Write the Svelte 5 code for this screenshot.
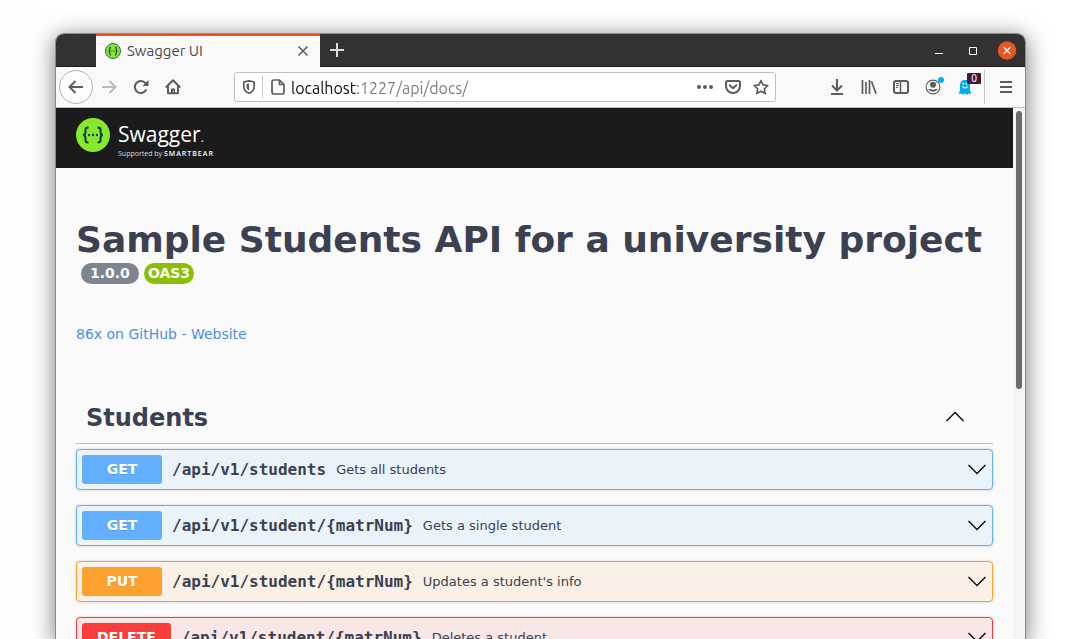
<script>
  let url = $state('localhost:1227/api/docs/');
  let open = $state(true);

  const operations = [
    { method: 'GET', path: '/api/v1/students', summary: 'Gets all students' },
    { method: 'GET', path: '/api/v1/student/{matrNum}', summary: 'Gets a single student' },
    { method: 'PUT', path: '/api/v1/student/{matrNum}', summary: "Updates a student's info" },
    { method: 'DELETE', path: '/api/v1/student/{matrNum}', summary: 'Deletes a student' }
  ];
</script>

<div class="desktop">
  <div class="window">
    <header class="titlebar">
      <div class="tab">
        <svg class="favicon" width="16" height="16" viewBox="0 0 16 16" fill="none">
          <circle cx="8" cy="8" r="7.5" fill="#85ea2d" stroke="#2c6a50" />
          <path d="M6 4C4.4 4 5 5.6 4.8 6.9 4.7 7.6 4.3 8 3.5 8c.8 0 1.200.4 1.300 1.100C5 10.400 4.400 12 6 12M10 4c1.600 0 1 1.600 1.200 2.900.1.7.5 1.100 1.300 1.100-.8 0-1.200.4-1.300 1.100C11 10.400 11.600 12 10 12" stroke="#173647" stroke-width="1.100" />
          <path d="M5.500 8h5" stroke="#4a9a45" />
        </svg>
        <span class="tab-title">Swagger UI</span>
        <button class="icon tab-close" aria-label="Close tab">
          <svg width="16" height="16" viewBox="0 0 16 16" fill="none" stroke="#5c5c5c" stroke-width="1.500"><path d="M3.500 3.500l9 9M12.500 3.500l-9 9" /></svg>
        </button>
      </div>
      <button class="icon new-tab" aria-label="New tab">
        <svg width="16" height="16" viewBox="0 0 16 16" fill="none" stroke="#dedede" stroke-width="2"><path d="M8 1v14M1 8h14" /></svg>
      </button>
      <div class="controls">
        <button class="icon" aria-label="Minimize">
          <svg width="20" height="20" viewBox="0 0 20 20" fill="none" stroke="#fff"><path d="M6 13.500h8" /></svg>
        </button>
        <button class="icon" aria-label="Maximize">
          <svg width="20" height="20" viewBox="0 0 20 20" fill="none" stroke="#fff"><path d="M6.500 7.500h7v7h-7z" /></svg>
        </button>
        <button class="icon" aria-label="Close window">
          <svg width="20" height="20" viewBox="0 0 20 20" fill="none"><circle cx="10" cy="10.500" r="9.300" fill="#e95420" /><path d="M6.500 7l7 7M13.500 7l-7 7" stroke="#fff" stroke-width="1.300" /></svg>
        </button>
      </div>
    </header>

    <nav class="toolbar">
      <button class="icon back" aria-label="Back">
        <svg width="16" height="16" viewBox="0 0 16 16"><path d="M15 8H1.500M7.500 2L1.500 8l6 6" /></svg>
      </button>
      <button class="icon tool faded" aria-label="Forward">
        <svg width="16" height="16" viewBox="0 0 16 16"><path d="M1 8h13.500M8.500 2l6 6-6 6" /></svg>
      </button>
      <button class="icon tool" aria-label="Reload">
        <svg width="16" height="16" viewBox="0 0 16 16"><path d="M13.300 10.500A6 6 0 1 1 12.500 4.200L14 6" /><path d="M15.500 1v6h-6z" fill="#5c5c5c" stroke="none" /></svg>
      </button>
      <button class="icon tool" aria-label="Home">
        <svg width="16" height="16" viewBox="0 0 16 16"><path d="M.8 8.500L8 1.300l7.200 7.200M3 7v7.200h10V7" stroke-linejoin="round" /><path d="M6 15V9.500h4V15z" fill="#5c5c5c" stroke="none" /><path d="M8 12h1v1H8z" fill="#f9f9fa" stroke="none" /></svg>
      </button>

      <div class="urlbar">
        <button class="icon shield" aria-label="Tracking protection">
          <svg width="14" height="16" viewBox="0 0 14 16"><path d="M7 1.800L12.200 3v4.500c0 3-2 5.500-5.200 6.700C3.800 13 1.800 10.500 1.800 7.500V3z" stroke-width="1.700" stroke-linejoin="round" /><path d="M7 4.500v7C5.200 10.500 4.500 9 4.500 7.500V5z" fill="#5c5c5c" stroke="none" /></svg>
        </button>
        <svg class="page-icon" width="14" height="16" viewBox="0 0 14 16"><path d="M3 1h5.500L13 5.500V13q0 2-2 2H3q-2 0-2-2V3q0-2 2-2zM8.500 1v4.500H13" stroke-width="1.700" stroke-linejoin="round" /></svg>
        <input type="text" aria-label="Address" bind:value={url} spellcheck="false" />
        <button class="icon action" aria-label="Page actions">
          <svg width="18" height="16" viewBox="0 0 18 16"><g fill="#5c5c5c" stroke="none"><circle cx="3" cy="8" r="2" /><circle cx="9" cy="8" r="2" /><circle cx="15" cy="8" r="2" /></g></svg>
        </button>
        <button class="icon action" aria-label="Save to Pocket">
          <svg width="16" height="16" viewBox="0 0 16 16"><path d="M2.500 2h11Q15 2 15 3.500V7A7 7 0 0 1 1 7V3.500Q1 2 2.500 2z" /><path d="M4.700 6.200L8 9.300l3.300-3.100" stroke-linecap="round" stroke-linejoin="round" /></svg>
        </button>
        <button class="icon action" aria-label="Bookmark">
          <svg width="16" height="16" viewBox="0 0 16 16"><path d="M8 1.500l2 4.400 4.800.6-3.500 3.300.9 4.800L8 12.200l-4.200 2.400.9-4.800L1.200 6.500 6 5.900z" stroke-width="1.700" stroke-linejoin="round" /></svg>
        </button>
      </div>

      <button class="icon tool" aria-label="Downloads">
        <svg width="16" height="16" viewBox="0 0 16 16"><path d="M8 0v11M3 6.500l5 5 5-5M2 15h12" /></svg>
      </button>
      <button class="icon tool" aria-label="Library">
        <svg width="16" height="16" viewBox="0 0 16 16"><path d="M1.500 1v14M5 3v12M8.500 1v14M10.500 2.300L15 14.700" stroke-width="1.700" /></svg>
      </button>
      <button class="icon tool" aria-label="Sidebars">
        <svg width="16" height="16" viewBox="0 0 16 16"><rect x="1" y="2" width="14" height="12" rx="2" /><path d="M7.500 2v12" stroke-width="1.500" /><path d="M3 4.500h3M3 6.500h3M3 8.500h2" stroke-width="1" /></svg>
      </button>
      <button class="icon tool" aria-label="Account">
        <svg width="16" height="16" viewBox="0 0 16 16"><circle cx="8" cy="8" r="6.900" stroke-width="1.100" /><circle cx="8" cy="5.800" r="3" fill="#5c5c5c" stroke="none" /><path d="M3.300 10h2.200Q8 11.300 10.500 10h2.200a5.300 5.300 0 0 1-9.400 0z" fill="#5c5c5c" stroke="none" /></svg>
        <span class="dot"></span>
      </button>
      <button class="icon tool" aria-label="Ghostery">
        <svg width="14" height="16" viewBox="0 0 14 16"><path d="M2 6.500C2 3 4 1 7 1s5 2 5 5.500v5l1.500 3.300-2.700-.4-1.300 1.400L7 14.500l-2.500 1.300-1.300-1.400-2.700.4L2 11.500z" fill="#00aef0" stroke="none" /><path d="M4.500 7.500Q7 10.500 9.500 7.500" stroke="#fff" stroke-width="1.200" /><circle cx="5.300" cy="4.800" r="1" fill="#fff" stroke="none" /><circle cx="8.700" cy="4.800" r="1" fill="#fff" stroke="none" /></svg>
        <span class="count">0</span>
      </button>
      <button class="icon tool menu" aria-label="Menu">
        <svg width="14" height="14" viewBox="0 0 14 14"><path d="M1 2h12M1 7h12M1 12h12" /></svg>
      </button>
    </nav>

    <div class="viewport">
      <div class="document">
        <div class="topbar">
          <a class="logo" href="#top">
            <svg width="34" height="34" viewBox="0 0 34 34" fill="none">
              <circle cx="17" cy="17" r="17" fill="#85ea2d" />
              <path d="M12.500 9.500c-3.500 0-3 1.500-3 4 0 2.200-.5 3.500-2.500 3.500 2 0 2.500 1.300 2.500 3.500 0 2.500-.5 4 3 4M21.500 9.500c3.500 0 3 1.500 3 4 0 2.200.5 3.500 2.500 3.500-2 0-2.500 1.300-2.500 3.500 0 2.500.5 4-3 4" stroke="#173647" stroke-width="2" />
              <g fill="#173647"><circle cx="13" cy="17" r="1.200" /><circle cx="17" cy="17" r="1.200" /><circle cx="21" cy="17" r="1.200" /></g>
            </svg>
            <span class="brand">
              <span class="name">Swagger<small>.</small></span>
              <span class="support">Supported by <b>SMARTBEAR</b></span>
            </span>
          </a>
        </div>

        <main>
          <h1>Sample Students API for a university project</h1>
          <div class="badges">
            <span class="badge version">1.0.0</span>
            <span class="badge oas">OAS3</span>
          </div>
          <a class="contact" href="#website">86x on GitHub - Website</a>

          <section>
            <div class="section-head">
              <h2>Students</h2>
              <button class="icon" aria-label="Toggle Students" aria-expanded={open} onclick={() => (open = !open)}>
                <svg class:flipped={!open} width="20" height="20" viewBox="0 0 20 20" fill="none" stroke="#111" stroke-width="1.500"><path d="M1.500 13L10 4.500l8.500 8.500" /></svg>
              </button>
            </div>
            {#if open}
              <div class="operations">
                {#each operations as op}
                  <button class="operation {op.method.toLowerCase()}">
                    <span class="method">{op.method}</span>
                    <span class="path">{op.path}</span>
                    <span class="summary">{op.summary}</span>
                    <svg width="20" height="20" viewBox="0 0 20 20" fill="none" stroke="#111" stroke-width="1.500"><path d="M1.500 5L10 13.500 18.500 5" /></svg>
                  </button>
                {/each}
              </div>
            {/if}
          </section>
        </main>
      </div>
      <div class="scrollbar"><div class="thumb"></div></div>
    </div>
  </div>
</div>

<style>
  :global(body) { margin: 0; background: #fff; }
  * { box-sizing: border-box; }

  .desktop {
    display: flex;
    height: 100vh;
    padding: 34px 54px 0 56px;
    overflow: hidden;
    background: linear-gradient(90deg, #fcfdfd, #fff 40px);
    font-family: "DejaVu Sans", sans-serif;
    color: #3b4151;
  }
  .window {
    flex: 1;
    min-width: 0;
    display: flex;
    flex-direction: column;
    border-radius: 8px 8px 0 0;
    background: #fafafa;
    box-shadow: 0 0 0 1px #8c8c8c, 0 4px 22px 2px rgba(0, 0, 0, 0.5);
  }
  .icon {
    display: flex;
    align-items: center;
    justify-content: center;
    padding: 0;
    border: 0;
    background: none;
    flex: none;
  }

  .titlebar {
    display: flex;
    height: 33px;
    flex: none;
    padding-left: 40px;
    background: #333132;
    border-bottom: 1px solid #1e1d1e;
    border-radius: 8px 8px 0 0;
    font-family: Ubuntu, "Noto Sans", sans-serif;
  }
  .tab {
    display: flex;
    align-items: center;
    width: 224px;
    height: 33px;
    padding: 0 9px 1px;
    border-top: 2px solid #e95420;
    background: #f9f9fa;
    font-size: 15px;
    line-height: 18px;
    color: #4a4a4a;
  }
  .tab-title { flex: 1; padding-left: 6px; }
  .new-tab { width: 34px; }
  .controls { display: flex; gap: 14px; margin-left: auto; padding-right: 8px; }

  .toolbar {
    display: flex;
    align-items: center;
    height: 41px;
    flex: none;
    padding: 0 3px;
    background: #f9f9fa;
    border-bottom: 1px solid #bdbdbd;
  }
  .toolbar svg { fill: none; stroke: #5c5c5c; stroke-width: 2; }
  .toolbar .faded svg { stroke: #b9b9b9; }
  .back { width: 34px; height: 34px; border: 1px solid #b1b1b1; border-radius: 50%; background: #fdfdfd; }
  .tool { position: relative; width: 32px; height: 34px; }
  .menu { margin-left: 3px; width: 38px; padding-left: 5px; border-left: 1px solid #c8c8c8; }
  .dot {
    position: absolute;
    top: 7px;
    right: 5px;
    width: 6px;
    height: 6px;
    border-radius: 50%;
    background: #00adf5;
  }
  .count {
    position: absolute;
    top: 3px;
    left: 18px;
    width: 14px;
    height: 11px;
    border-radius: 1px;
    background: #3f1741;
    color: #fff;
    font: 10px/11px "Noto Sans", sans-serif;
  }

  .urlbar {
    display: flex;
    align-items: center;
    flex: 1;
    min-width: 0;
    height: 30px;
    margin: 0 45px;
    border: 1px solid #bfbfbf;
    border-radius: 3px;
    background: #fff;
  }
  .shield { width: 28px; height: 22px; border-right: 1px solid #c4c4c4; }
  .page-icon { flex: none; margin-left: 8px; }
  .urlbar input {
    flex: 1;
    min-width: 0;
    margin-left: 6px;
    padding: 2px 0 0;
    border: 0;
    outline: 0;
    font: 16px/20px Ubuntu, "Noto Sans", sans-serif;
    color: transparent;
    caret-color: #000;
    background: linear-gradient(90deg, #0c0c0d 66px, #7b7b7b 66px);
    -webkit-background-clip: text;
    background-clip: text;
  }
  .action { width: 28px; height: 28px; }

  .viewport { flex: 1; display: flex; min-height: 0; overflow: hidden; }
  .document { flex: 1; min-width: 0; }
  .scrollbar { width: 12px; padding: 3px; background: #f5f5f5; }
  .thumb { height: 278px; border-radius: 3px; background: #6b6b6b; }

  .topbar { display: flex; align-items: flex-start; height: 60px; padding: 10px 20px 0; background: #1b1b1b; }
  .logo { display: flex; align-items: flex-start; gap: 8px; color: #fff; text-decoration: none; font-family: "Open Sans", sans-serif; }
  .brand { display: flex; flex-direction: column; padding-top: 2px; }
  .name { font-size: 21px; line-height: 29px; font-weight: 400; }
  .name small { font-size: 12px; line-height: 12px; }
  .support { font-size: 7px; line-height: 10px; color: #ddd; }
  .support b { font-weight: 600; color: #fff; letter-spacing: 1px; }

  main { padding: 51px 20px 0; }
  h1 { margin: 0; font-size: 36px; line-height: 42px; }
  h2 { margin: 0; font-size: 24px; line-height: 28px; }
  .badges { display: flex; gap: 5px; padding: 2px 0 0 5px; }
  .badge { padding: 0 9px; border-radius: 11px; font-size: 14px; line-height: 21px; font-weight: 700; color: #fff; }
  .version { background: #7d8492; }
  .oas { padding: 0 4px; background: #89bf04; }
  .contact { display: block; margin-top: 42px; font-size: 14px; line-height: 17px; color: #4990e2; text-decoration: none; }

  section { margin-top: 48px; }
  .section-head {
    display: flex;
    align-items: center;
    justify-content: space-between;
    padding: 13px 28px 11px 10px;
    border-bottom: 1px solid #bfc0c3;
  }
  .flipped { transform: rotate(180deg); }
  .operations { display: flex; flex-direction: column; gap: 15px; padding-top: 5px; }
  .operation {
    display: flex;
    align-items: center;
    width: 100%;
    padding: 5px;
    border: 1px solid;
    border-radius: 4px;
    box-shadow: 0 0 3px rgba(0, 0, 0, 0.19);
    font-family: "DejaVu Sans", sans-serif;
    color: #3b4151;
    text-align: left;
  }
  .method {
    min-width: 80px;
    padding: 6px 15px;
    border-radius: 3px;
    font-size: 14px;
    line-height: 17px;
    font-weight: 700;
    text-align: center;
    text-shadow: 0 1px 0 rgba(0, 0, 0, 0.1);
    color: #fff;
  }
  .path { padding: 0 10px; font: bold 16px/19px "DejaVu Sans Mono", monospace; }
  .summary { flex: 1; font-size: 13px; line-height: 16px; }
  .get { border-color: #61affe; background: #eaf2fa; }
  .get .method { background: #61affe; }
  .put { border-color: #fca130; background: #faf0e5; }
  .put .method { background: #fca130; }
  .delete { border-color: #f93e3e; background: #f9e6e6; }
  .delete .method { background: #f93e3e; }
</style>
